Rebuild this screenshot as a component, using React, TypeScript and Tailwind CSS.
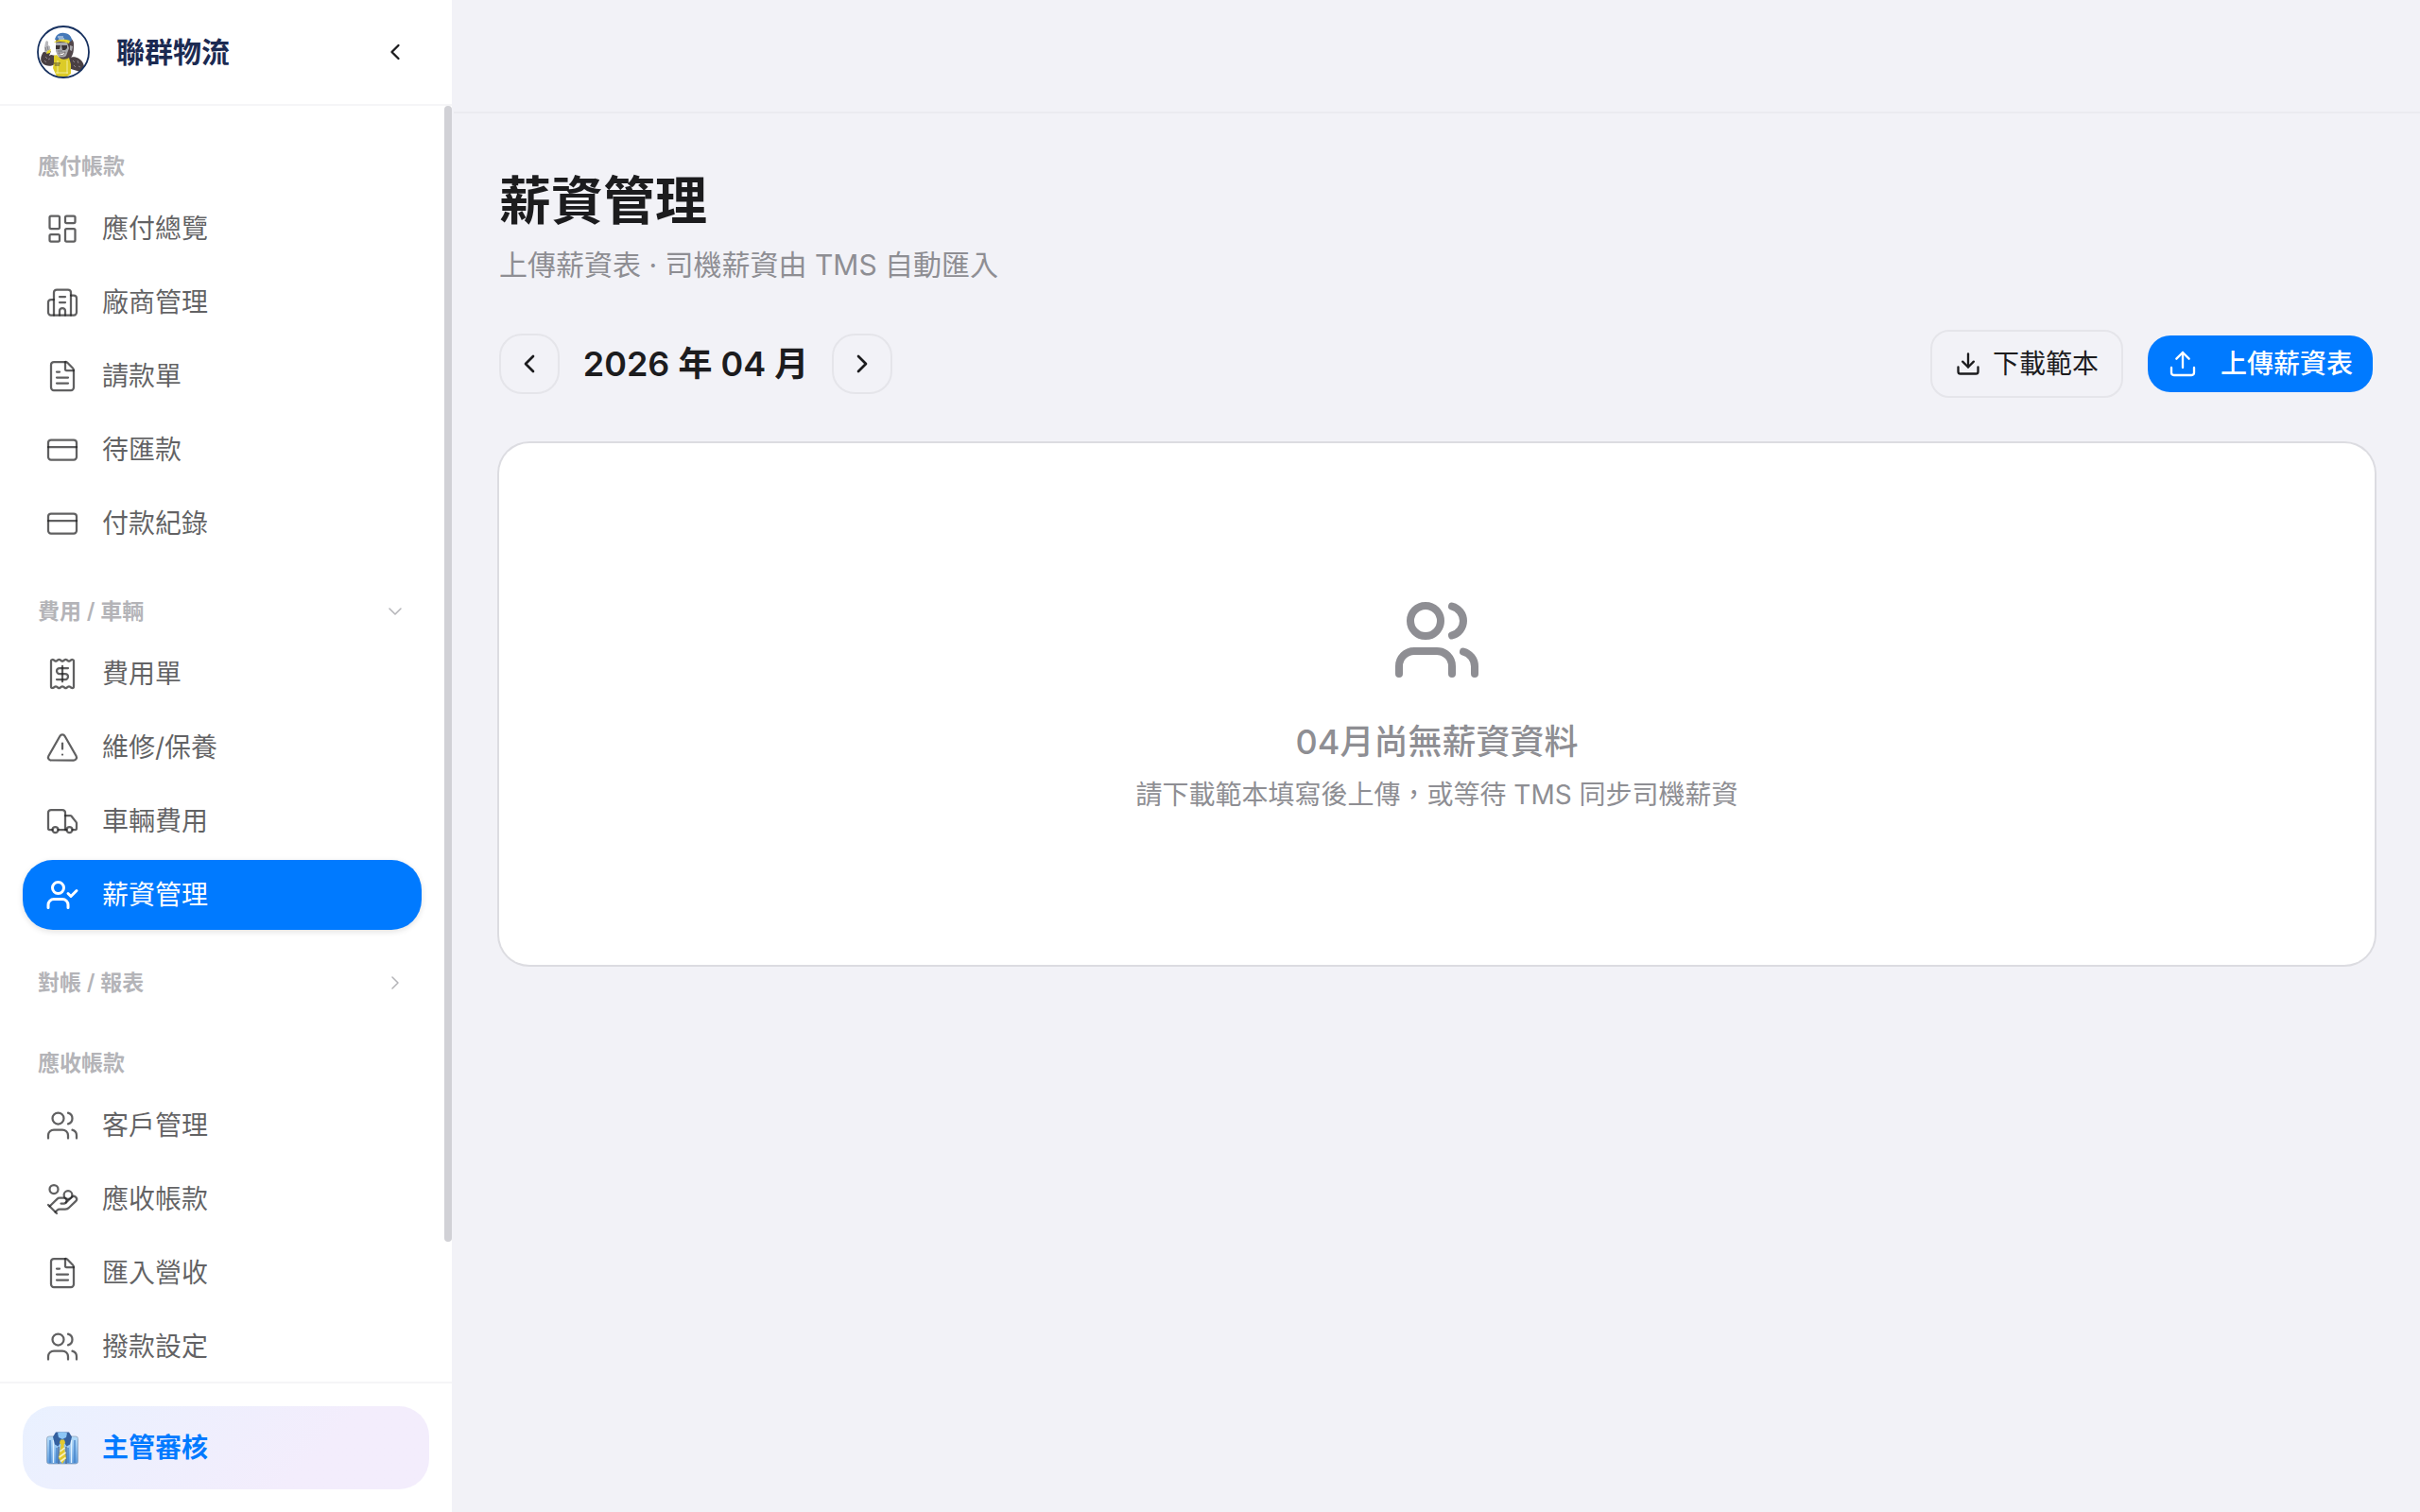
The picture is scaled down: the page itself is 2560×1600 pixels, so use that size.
import type { ComponentType } from 'react';
import {
  LayoutDashboard, Building2, FileText, CreditCard, TriangleAlert, Truck, UserCheck,
  Users, HandCoins, ChevronLeft, ChevronRight, ChevronDown, Download, Upload,
} from 'lucide-react';

type IconProps = { size?: number; strokeWidth?: number; className?: string };

type NavItem = { icon: ComponentType<IconProps>; label: string; active?: boolean };

type NavSection = { title: string; collapsible?: boolean; open?: boolean; items: NavItem[] };

function ReceiptDollar({ size = 24, strokeWidth = 2, className }: IconProps) {
  return (
    <svg
      width={size}
      height={size}
      viewBox="0 0 24 24"
      fill="none"
      stroke="currentColor"
      strokeWidth={strokeWidth}
      strokeLinecap="round"
      strokeLinejoin="round"
      className={className}
    >
      <path d="M4 3a1 1 0 0 1 1-1 1.3 1.3 0 0 1 .7.2l.933.6a1.3 1.3 0 0 0 1.4 0l.934-.6a1.3 1.3 0 0 1 1.4 0l.933.6a1.3 1.3 0 0 0 1.4 0l.933-.6a1.3 1.3 0 0 1 1.4 0l.934.6a1.3 1.3 0 0 0 1.4 0l.933-.6A1.3 1.3 0 0 1 19 2a1 1 0 0 1 1 1v18a1 1 0 0 1-1 1 1.3 1.3 0 0 1-.7-.2l-.933-.6a1.3 1.3 0 0 0-1.4 0l-.934.6a1.3 1.3 0 0 1-1.4 0l-.933-.6a1.3 1.3 0 0 0-1.4 0l-.933.6a1.3 1.3 0 0 1-1.4 0l-.934-.6a1.3 1.3 0 0 0-1.4 0l-.933.6a1.3 1.3 0 0 1-.7.2 1 1 0 0 1-1-1z" />
      <path d="M16 8h-6a2 2 0 1 0 0 4h4a2 2 0 1 1 0 4H8" />
      <path d="M12 17.5v-11" />
    </svg>
  );
}

function MascotLogo() {
  return (
    <svg viewBox="0 0 56 56" className="size-14 shrink-0" role="img" aria-label="聯群物流">
      <defs>
        <clipPath id="mascot">
          <circle cx="28" cy="28" r="27" />
        </clipPath>
      </defs>
      <circle cx="28" cy="28" r="27" fill="#fff" />
      <g clipPath="url(#mascot)">
        {/* arms */}
        <path d="M7 28c-3 4-4 9-1 12 3 3 9 4 13 1l1-9-5-1-2 1 2-5-3 1z" fill="#4a4043" />
        <path d="M34 34c6-2 12 0 15 6l2 6-5 3-10-3-3-6z" fill="#4a4043" />
        <path d="M38 37l2 2M43 37l1 3M39 42l2 2M44 43l2 1M9 33l2 2M12 36l2-1M8 37l2 2" stroke="#8b8288" strokeWidth="1" />
        {/* thumb up */}
        <path d="M8 23l1-5 1-2 2 1v4l2 1v5l-3 2-3-1z" fill="#b9b9bd" />
        <path d="M9 23l1 4M11 22l1 4" stroke="#6f6e74" strokeWidth=".8" />
        <path d="M11 27l4-2-1 4-4 1z" fill="#e6d62c" />
        {/* head */}
        <path d="M20 17c0-7 18-8 19 2 0 7 0 12-4 16-4 3-10 2-12-2-2-4-3-9-3-16z" fill="#51464a" />
        <path d="M20 18h12l2 6-3 8c-2 2-7 2-9 0l-2-5z" fill="#a9a9ad" />
        <path d="M20 21h5l-1 4h-4zM26 21h6v3l-2 2h-3z" fill="#3b3436" />
        <path d="M22 27h5" stroke="#77757a" strokeWidth="1" />
        <path d="M23 29c3 1 5 0 7-1-1 4-5 5-7 1z" fill="#fff" stroke="#55494b" strokeWidth=".6" />
        <path d="M35 21l3 1-1 5-2-1z" fill="#a9a9ad" />
        {/* cap */}
        <path d="M19 15c1-5 5-8 10-7 5 0 8 4 8 8l-2 1-8-2z" fill="#4579b8" />
        <path d="M18 18c4-4 12-4 17-2l-1 3c-5-2-11-3-15-1z" fill="#e6d62c" />
        <path d="M22 12h6M23 14h6" stroke="#e7edf5" strokeWidth="1" />
        {/* vest */}
        <path d="M18 32l3-1c3 5 9 6 13 3l2 7v10l-4 3H21l-4-9 1-6z" fill="#dccb27" />
        <path d="M22 37v14M32 37v14M20 50h13" stroke="#f2ed9b" strokeWidth="1" />
        <path d="M18 40h7M19 42h5" stroke="#5b5530" strokeWidth="1.2" />
      </g>
      <circle cx="28" cy="28" r="27" fill="none" stroke="#16305f" strokeWidth="1.8" />
    </svg>
  );
}

function ShirtTie({ className }: IconProps) {
  return (
    <svg viewBox="0 0 36 36" className={className} aria-hidden="true">
      <defs>
        <linearGradient id="shirt" x1="0" y1="0" x2="0" y2="1">
          <stop offset="0" stopColor="#b7defb" />
          <stop offset="1" stopColor="#5b9add" />
        </linearGradient>
      </defs>
      <rect x="1.5" y="6" width="33" height="29" rx="2.5" fill="url(#shirt)" stroke="#8fa3bb" strokeWidth=".8" />
      <path d="M5 10v24M12 18v16M24 18v16M31 10v24" stroke="#3f7cc4" strokeWidth="1.2" />
      <path d="M8.5 10v24M27.5 10v24" stroke="#dff1ff" strokeWidth="1.4" />
      <path d="M14 17v18M22 17v18" stroke="#4a6287" strokeWidth="1.2" />
      <path d="M11 1.5h14l3 5-2 8-3.500 2-4.500-7-4.500 7-3.500-2-2-8z" fill="#34609f" />
      <path d="M13 2.500c2-1.300 8-1.300 10 0l-1 4.500-4 2-4-2z" fill="#8cc6f5" />
      <path d="M16 9.500h4l1 3-1.500 2.500L22 29l-4 6-4-6 2.500-14-1.500-2.500z" fill="#e3c92f" />
      <path d="M15.500 22l5-4M14.600 28l7-5M16 32.500l5.500-4" stroke="#f7f0c4" strokeWidth="1.600" />
    </svg>
  );
}

const sections: NavSection[] = [
  {
    title: '應付帳款',
    items: [
      { icon: LayoutDashboard, label: '應付總覽' },
      { icon: Building2, label: '廠商管理' },
      { icon: FileText, label: '請款單' },
      { icon: CreditCard, label: '待匯款' },
      { icon: CreditCard, label: '付款紀錄' },
    ],
  },
  {
    title: '費用 / 車輛',
    collapsible: true,
    open: true,
    items: [
      { icon: ReceiptDollar, label: '費用單' },
      { icon: TriangleAlert, label: '維修/保養' },
      { icon: Truck, label: '車輛費用' },
      { icon: UserCheck, label: '薪資管理', active: true },
    ],
  },
  { title: '對帳 / 報表', collapsible: true, items: [] },
  {
    title: '應收帳款',
    items: [
      { icon: Users, label: '客戶管理' },
      { icon: HandCoins, label: '應收帳款' },
      { icon: FileText, label: '匯入營收' },
      { icon: Users, label: '撥款設定' },
    ],
  },
];

const labelClass = 'mb-[9px] flex h-10 w-full items-center justify-between px-4 text-[23px] font-semibold text-[#b4b4b8]';

function Section({ title, collapsible, open, items }: NavSection) {
  return (
    <section>
      {collapsible ? (
        <button type="button" aria-expanded={!!open} className={labelClass}>
          <span>{title}</span>
          {open ? <ChevronDown size={24} strokeWidth={1.5} /> : <ChevronRight size={24} strokeWidth={1.5} />}
        </button>
      ) : (
        <h2 className={labelClass}>{title}</h2>
      )}
      {items.length > 0 && (
        <ul className="flex flex-col gap-1">
          {items.map(({ icon: Icon, label, active }) => (
            <li key={label}>
              <a
                href="#"
                aria-current={active ? 'page' : undefined}
                className={`flex h-[74px] items-center gap-6 rounded-[32px] px-6 text-[28px] ${
                  active
                    ? 'bg-[#007aff] text-white shadow-[0_2px_6px_rgba(0,0,0,0.12)]'
                    : 'text-[#1c1c1e]/70'
                }`}
              >
                <Icon size={36} strokeWidth={active ? 2 : 1.5} className="shrink-0" />
                <span>{label}</span>
              </a>
            </li>
          ))}
        </ul>
      )}
    </section>
  );
}

function Sidebar() {
  return (
    <aside className="flex h-full w-[480px] shrink-0 flex-col border-r-2 border-[#f2f2f7] bg-white">
      <div className="flex h-28 shrink-0 items-center border-b-2 border-[#f5f5f7] pr-[34px] pl-[39px]">
        <MascotLogo />
        <span className="ml-7 flex-1 text-[30px] font-bold text-[#1b2a52]">聯群物流</span>
        <button type="button" aria-label="收合選單" className="p-3 text-[#1c1c1e]">
          <ChevronLeft size={28} strokeWidth={2} />
        </button>
      </div>

      <div className="relative min-h-0 flex-1">
        <nav className="flex h-full flex-col gap-9 overflow-y-auto pt-11 pr-8 pb-[167px] pl-6 [scrollbar-width:none]">
          {sections.map((section) => (
            <Section key={section.title} {...section} />
          ))}
        </nav>
        {/* scroll thumb */}
        <div className="absolute top-0 right-0 h-[89%] w-2 rounded-full bg-[#d1d1d6]" />
      </div>

      <div className="shrink-0 border-t-2 border-[#f5f5f7] p-6">
        <a
          href="#"
          className="flex h-[88px] items-center gap-6 rounded-[32px] bg-linear-135 from-[#e9f1ff] to-[#f3edfc] to-70% px-6 text-[28px] font-semibold text-[#007aff]"
        >
          <ShirtTie className="size-9 shrink-0" />
          <span>主管審核</span>
        </a>
      </div>
    </aside>
  );
}

const stepClass = 'flex size-16 items-center justify-center rounded-3xl border-2 border-[#e5e5ea]';

export default function App() {
  return (
    <div className="flex h-screen w-full bg-[#f2f2f7] font-['Inter','Noto_Sans_CJK_TC',sans-serif] text-[#1c1c1e]">
      <Sidebar />

      <div className="flex min-w-0 flex-1 flex-col">
        <header className="h-[120px] shrink-0 border-b-2 border-[#ebebf0]" />

        <main className="flex-1 overflow-y-auto px-12 pt-14">
          <h1 className="text-[55px] leading-[72px] font-bold">薪資管理</h1>
          <p className="mt-2 text-[30px] leading-12 text-[#8e8e93]">上傳薪資表 · 司機薪資由 TMS 自動匯入</p>

          <div className="mt-[45px] flex items-center justify-between pr-0.5">
            <div className="flex items-center gap-6">
              <button type="button" aria-label="上個月" className={stepClass}>
                <ChevronLeft size={32} />
              </button>
              <span className="min-w-60 text-center text-[36px] font-semibold">2026 年 04 月</span>
              <button type="button" aria-label="下個月" className={stepClass}>
                <ChevronRight size={32} />
              </button>
            </div>
            <div className="flex items-center gap-[26px]">
              <button
                type="button"
                className="flex h-[72px] items-center gap-3 rounded-[20px] border-2 border-[#e5e5ea] px-6 text-[28px]"
              >
                <Download size={28} />
                下載範本
              </button>
              <button
                type="button"
                className="flex h-[60px] items-center gap-6 rounded-3xl bg-[#007aff] px-[21px] text-[28px] font-medium text-white"
              >
                <Upload size={32} strokeWidth={1.75} />
                上傳薪資表
              </button>
            </div>
          </div>

          <div className="mt-12 flex flex-col items-center rounded-[32px] bg-white py-40 text-[#8e8e93] ring-2 ring-[#dcdce1]">
            <Users size={96} />
            <p className="mt-9 text-[36px] leading-12 font-medium">04月尚無薪資資料</p>
            <p className="mt-3 text-[28px] leading-10">請下載範本填寫後上傳，或等待 TMS 同步司機薪資</p>
          </div>
        </main>
      </div>
    </div>
  );
}
